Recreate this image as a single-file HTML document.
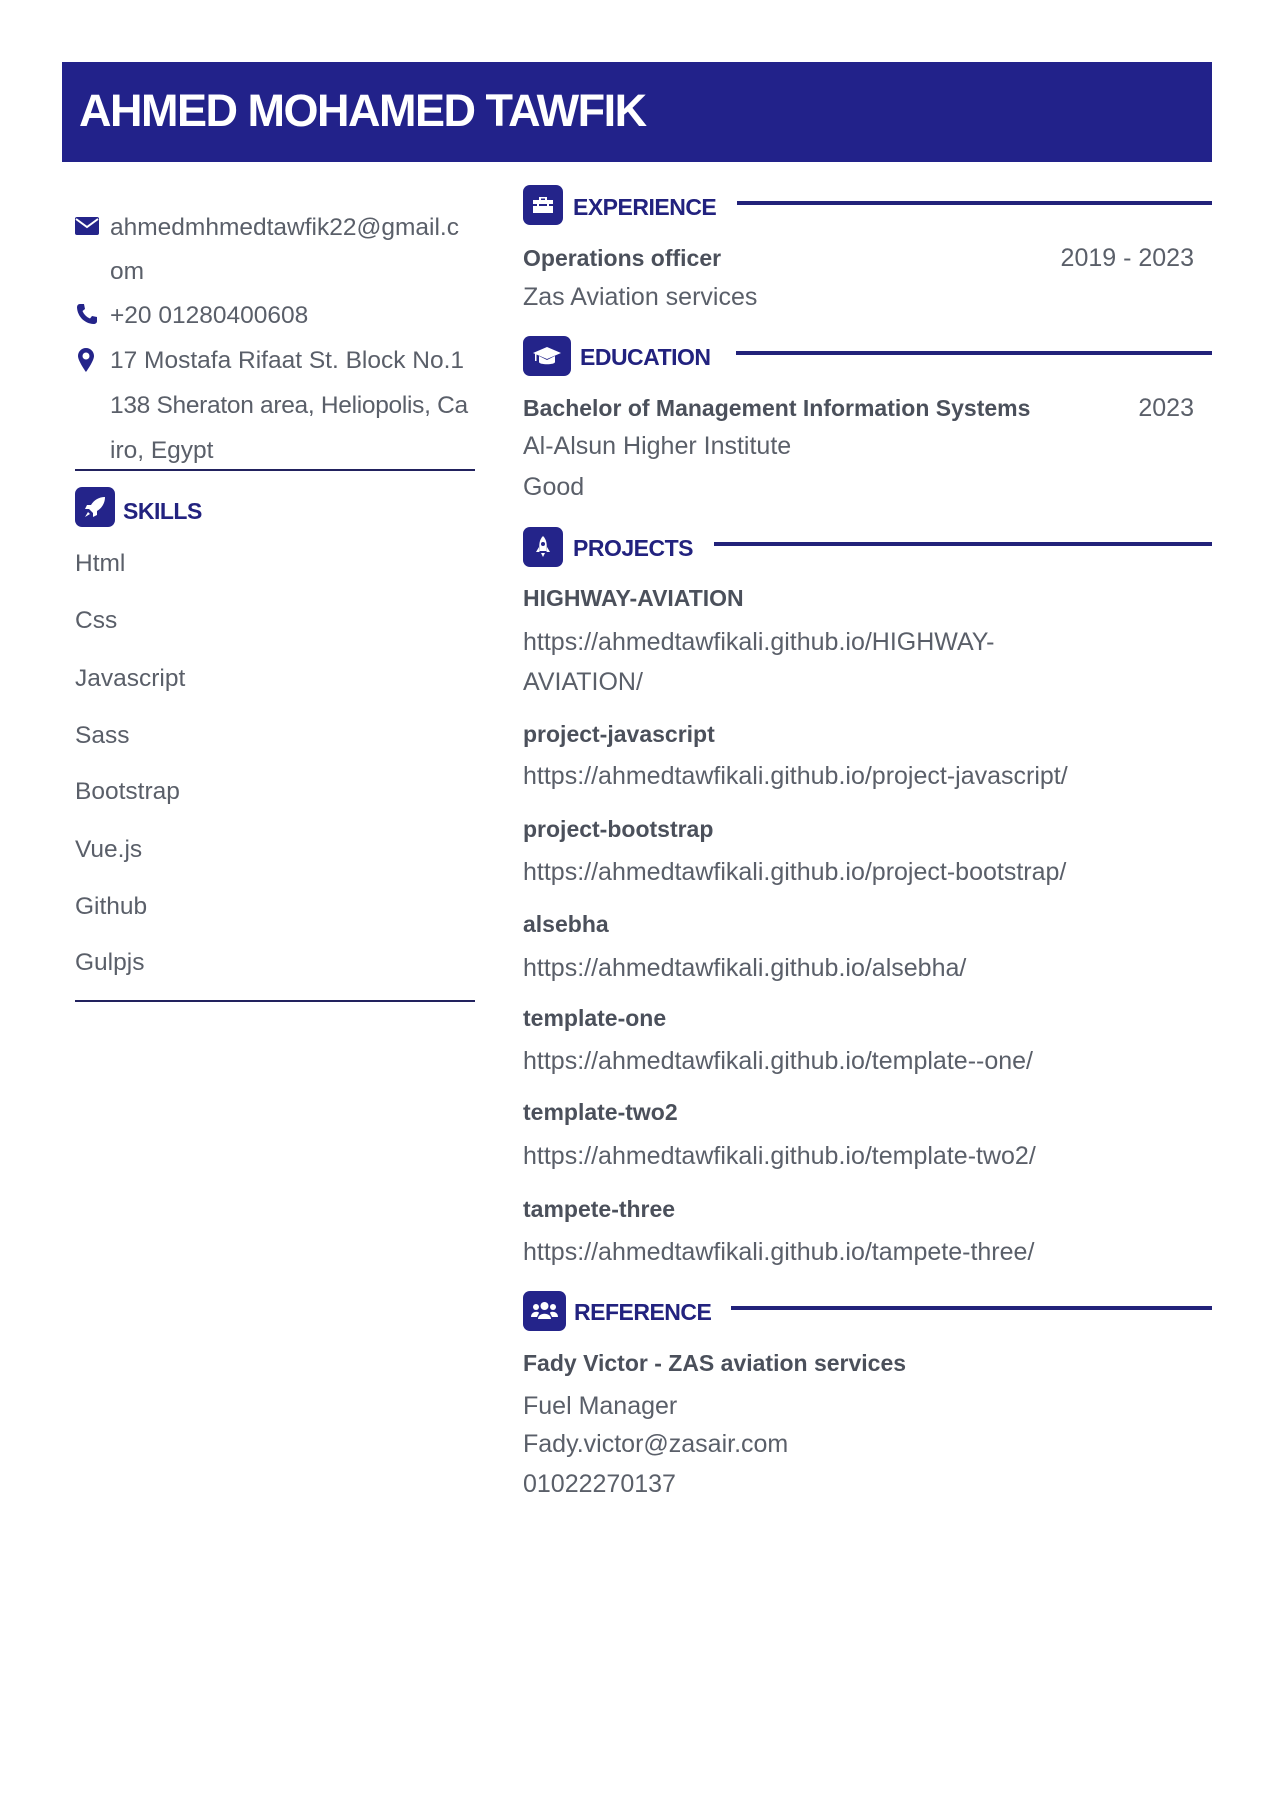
<!DOCTYPE html>
<html><head><meta charset="utf-8"><style>
*{margin:0;padding:0;box-sizing:border-box}
body{width:1271px;height:1797px;background:#fff;position:relative;font-family:"Liberation Sans",sans-serif;color:#5a5f69;overflow:hidden}
.a{position:absolute;white-space:nowrap;font-size:25px;line-height:30px}
.l{font-size:24.5px}
.b{font-weight:bold;color:#4b505b;font-size:23px}
.h{position:absolute;font-weight:bold;color:#22227f;font-size:23px;line-height:30px;letter-spacing:-0.5px}
.ib{position:absolute;width:40px;height:40px;background:#24248a;border-radius:7px}
.ib svg{position:absolute;left:8px;top:8px}
.ln{position:absolute;height:4px;background:#22227a}
.hl{position:absolute;height:2px;background:#22225e;left:75px;width:400px}
.r{position:absolute;white-space:nowrap;font-size:25px;line-height:30px;right:77px}
</style></head><body>
<div style="position:absolute;left:62px;top:62px;width:1150px;height:100px;background:#22228a"></div>
<div style="position:absolute;left:79px;top:83px;color:#fff;font-weight:bold;font-size:45px;line-height:56px;letter-spacing:-1.5px;white-space:nowrap">AHMED MOHAMED TAWFIK</div>

<svg style="position:absolute;left:75px;top:217px" width="24" height="18" viewBox="0 0 24 18"><rect x="0" y="0" width="24" height="18" rx="2" fill="#24248a"/><path d="M1 2 L12 10 L23 2" stroke="#fff" stroke-width="2" fill="none"/></svg>
<div class="a l" style="left:110px;top:213px">ahmedmhmedtawfik22@gmail.c</div>
<div class="a l" style="left:110px;top:257px">om</div>
<svg style="position:absolute;left:75px;top:302px" width="24" height="24" viewBox="0 0 24 24"><path d="M5 2 L9 2 L10 7 L7.5 9 C9 12.5 11.5 15 15 16.5 L17 14 L22 15 L22 19 C22 21 20.5 22 18.5 22 C9.5 21.5 2.5 14.5 2 5.5 C2 3.5 3 2 5 2Z" fill="#24248a"/></svg>
<div class="a l" style="left:110px;top:301px">+20 01280400608</div>
<svg style="position:absolute;left:77px;top:347px" width="18" height="26" viewBox="0 0 18 26"><path d="M9 1 C4.5 1 1 4.5 1 9 C1 14 9 25 9 25 C9 25 17 14 17 9 C17 4.5 13.5 1 9 1Z M9 5.5 A3.5 3.5 0 1 1 9 12.5 A3.5 3.5 0 1 1 9 5.5Z" fill="#24248a" fill-rule="evenodd"/></svg>
<div class="a l" style="left:110px;top:346px">17 Mostafa Rifaat St. Block No.1</div>
<div class="a l" style="left:110px;top:391px;letter-spacing:-0.3px">138 Sheraton area, Heliopolis, Ca</div>
<div class="a l" style="left:110px;top:436px">iro, Egypt</div>
<div class="hl" style="top:469px"></div>
<div class="ib" style="left:75px;top:487px"><svg width="24" height="24" viewBox="0 0 24 24"><path d="M22 2 C16 2 11 5 8 10 L4 10 L2 14 L6 14 L10 18 L10 22 L14 20 L14 16 C19 13 22 8 22 2Z M5 17 L2 22 L7 19Z" fill="#fff"/></svg></div>
<div class="h" style="left:123px;top:496px">SKILLS</div>
<div class="a l" style="left:75px;top:549px">Html</div>
<div class="a l" style="left:75px;top:606px">Css</div>
<div class="a l" style="left:75px;top:664px">Javascript</div>
<div class="a l" style="left:75px;top:721px">Sass</div>
<div class="a l" style="left:75px;top:777px">Bootstrap</div>
<div class="a l" style="left:75px;top:835px">Vue.js</div>
<div class="a l" style="left:75px;top:892px">Github</div>
<div class="a l" style="left:75px;top:948px">Gulpjs</div>
<div class="hl" style="top:1000px"></div>

<div class="ib" style="left:523px;top:185px"><svg width="24" height="24" viewBox="0 0 24 24"><path d="M8 4 L16 4 L16 7 L22 7 L22 20 L2 20 L2 7 L8 7Z M10 5.5 L10 7 L14 7 L14 5.5Z" fill="#fff" fill-rule="evenodd"/><rect x="2" y="11" width="20" height="2" fill="#24248a"/><rect x="6" y="11" width="2" height="4" fill="#fff"/><rect x="16" y="11" width="2" height="4" fill="#fff"/></svg></div>
<div class="h" style="left:573px;top:192px">EXPERIENCE</div>
<div class="ln" style="left:737px;top:201px;width:475px"></div>
<div class="a b" style="left:523px;top:243px">Operations officer</div>
<div class="r" style="top:243px">2019 - 2023</div>
<div class="a" style="left:523px;top:282px">Zas Aviation services</div>

<div class="ib" style="left:523px;top:336px;width:48px"><svg width="32" height="24" viewBox="0 0 32 24"><path d="M16 3 L30 9 L16 15 L2 9Z" fill="#fff"/><path d="M8 12 L8 18 C8 21 24 21 24 18 L24 12 L16 16Z" fill="#fff"/><rect x="4" y="10" width="1.5" height="7" fill="#fff"/></svg></div>
<div class="h" style="left:580px;top:342px">EDUCATION</div>
<div class="ln" style="left:736px;top:351px;width:476px"></div>
<div class="a b" style="left:523px;top:393px">Bachelor of Management Information Systems</div>
<div class="r" style="top:393px">2023</div>
<div class="a" style="left:523px;top:431px">Al-Alsun Higher Institute</div>
<div class="a" style="left:523px;top:472px">Good</div>

<div class="ib" style="left:523px;top:527px"><svg width="24" height="24" viewBox="0 0 24 24"><path d="M12 1 C8 5 8 10 8.5 16 L15.5 16 C16 10 16 5 12 1Z" fill="#fff"/><circle cx="12" cy="9" r="2" fill="#24248a"/><path d="M8 12 L5 17 L8.5 17Z M16 12 L19 17 L15.5 17Z M10 18 L14 18 L12 22Z" fill="#fff"/></svg></div>
<div class="h" style="left:573px;top:533px">PROJECTS</div>
<div class="ln" style="left:714px;top:542px;width:498px"></div>
<div class="a b" style="left:523px;top:583px">HIGHWAY-AVIATION</div>
<div class="a" style="left:523px;top:627px">https://ahmedtawfikali.github.io/HIGHWAY-</div>
<div class="a" style="left:523px;top:667px">AVIATION/</div>
<div class="a b" style="left:523px;top:719px">project-javascript</div>
<div class="a" style="left:523px;top:761px">https://ahmedtawfikali.github.io/project-javascript/</div>
<div class="a b" style="left:523px;top:814px">project-bootstrap</div>
<div class="a" style="left:523px;top:857px">https://ahmedtawfikali.github.io/project-bootstrap/</div>
<div class="a b" style="left:523px;top:909px">alsebha</div>
<div class="a" style="left:523px;top:953px">https://ahmedtawfikali.github.io/alsebha/</div>
<div class="a b" style="left:523px;top:1003px">template-one</div>
<div class="a" style="left:523px;top:1046px">https://ahmedtawfikali.github.io/template--one/</div>
<div class="a b" style="left:523px;top:1097px">template-two2</div>
<div class="a" style="left:523px;top:1141px">https://ahmedtawfikali.github.io/template-two2/</div>
<div class="a b" style="left:523px;top:1194px">tampete-three</div>
<div class="a" style="left:523px;top:1237px">https://ahmedtawfikali.github.io/tampete-three/</div>

<div class="ib" style="left:523px;top:1291px;width:43px"><svg width="27" height="24" viewBox="0 0 27 24"><circle cx="13.5" cy="7" r="4" fill="#fff"/><circle cx="5" cy="8" r="3" fill="#fff"/><circle cx="22" cy="8" r="3" fill="#fff"/><path d="M7 20 C7 13 20 13 20 20Z M0 18 C0 12 8 12 8 14 L6 18Z M27 18 C27 12 19 12 19 14 L21 18Z" fill="#fff"/></svg></div>
<div class="h" style="left:574px;top:1297px">REFERENCE</div>
<div class="ln" style="left:731px;top:1306px;width:481px"></div>
<div class="a b" style="left:523px;top:1348px">Fady Victor - ZAS aviation services</div>
<div class="a" style="left:523px;top:1391px">Fuel Manager</div>
<div class="a" style="left:523px;top:1429px">Fady.victor@zasair.com</div>
<div class="a" style="left:523px;top:1469px">01022270137</div>
</body></html>
